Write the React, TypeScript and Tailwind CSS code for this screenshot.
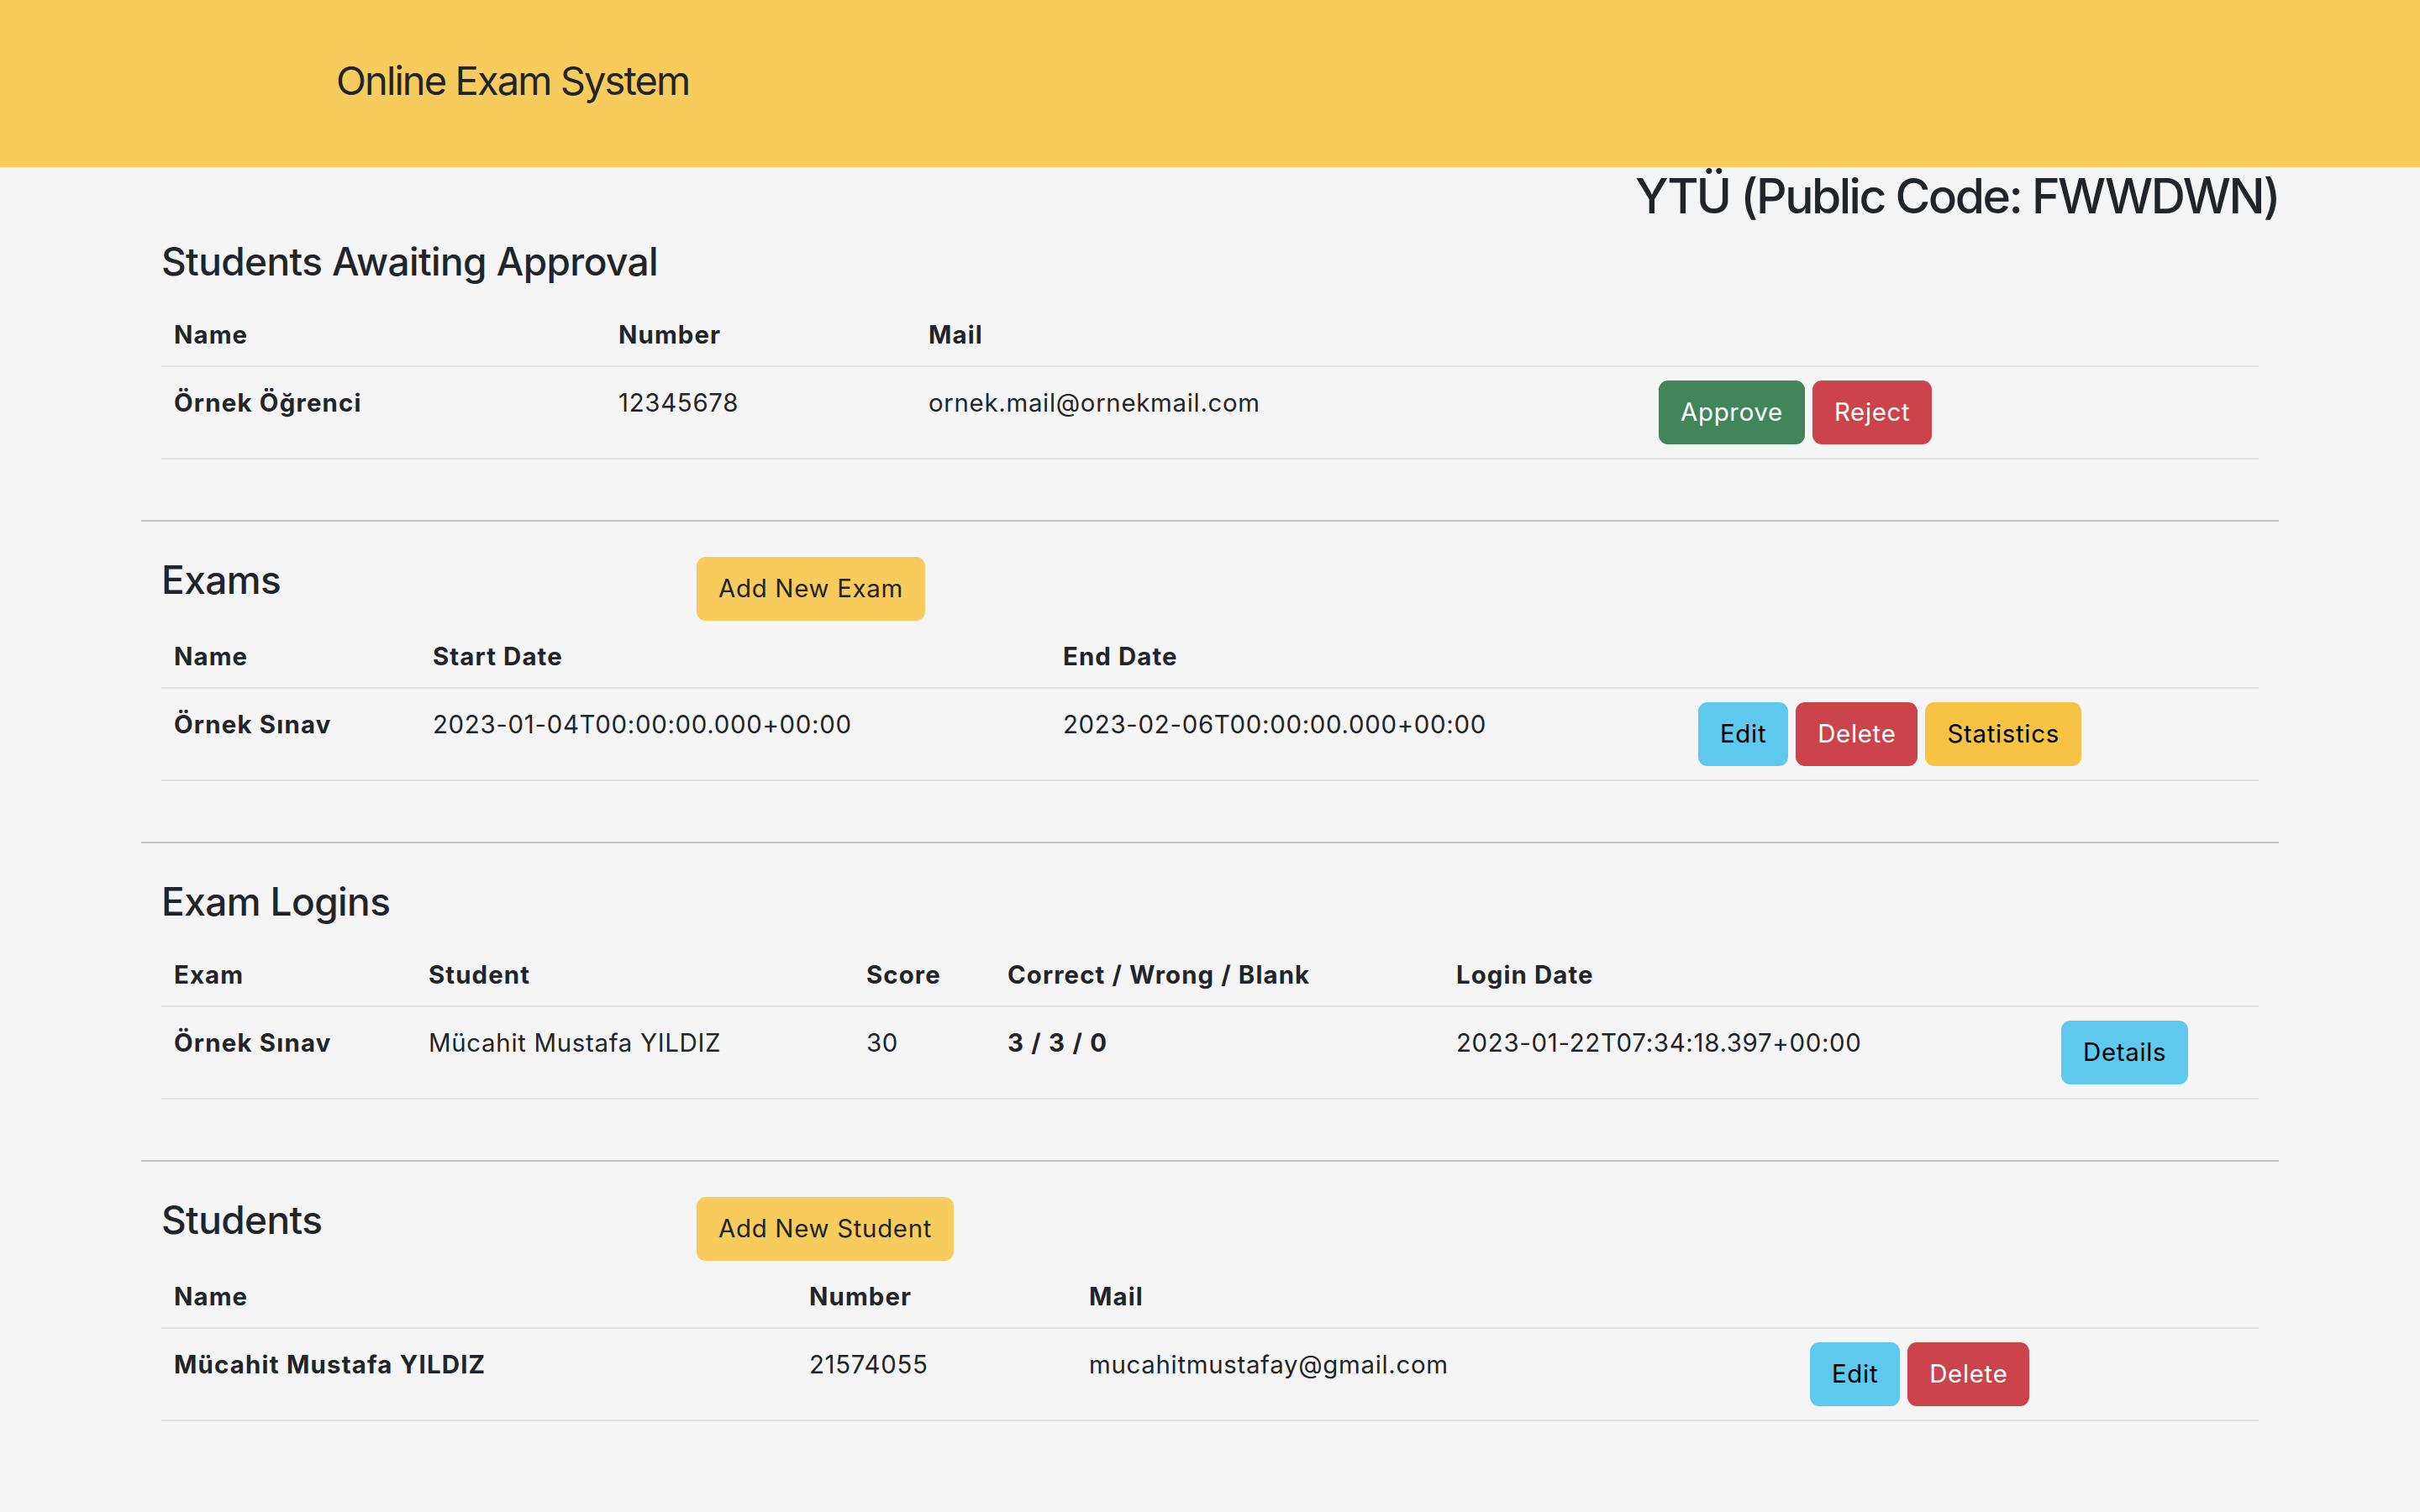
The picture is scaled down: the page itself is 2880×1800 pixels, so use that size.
import React from 'react';

const th = "text-left align-top font-bold tracking-[1.1px] px-[15px] py-[14px] leading-[44px] border-b-2 border-[#dee2e6]";
const td = "text-left align-top px-[15px] pt-[21px] pb-[11px] leading-[44px] border-b-2 border-[#dee2e6]";
const tdBtn = "text-left align-top px-[15px] py-[16px] leading-[44px] border-b-2 border-[#dee2e6]";
const strong = "font-bold tracking-[1.2px]";
const btn = "h-[76px] rounded-[11px] px-[26px] text-[29.4px] leading-none";

function Section({ title, action, children }: { title: string; action?: string; children: React.ReactNode }) {
    return (
        <section className="px-[24px]">
            <div className="flex items-start">
                <h3 className="w-[637px] text-[46px] leading-[55px] font-medium tracking-[-0.6px] mb-[24px]">{title}</h3>
                {action && (
                    <button className={`${btn} mb-[7px] bg-[#f7cb5c] text-[#212529]`}>{action}</button>
                )}
            </div>
            {children}
        </section>
    );
}

function Divider() {
    return <hr className="mt-[72px] mb-[42px] border-0 border-t-2 border-[#c4c4c4]" />;
}

export default function App() {
    return (
        <div className="min-h-screen bg-[#f5f5f5] text-[#212529] text-[29.4px] tracking-[0.7px] font-['Inter',sans-serif]">
            <header className="h-[199px] bg-[#f7cb5c] flex items-center pl-[400px] pb-[6px]">
                <span className="text-[47px] tracking-[-1.9px]">Online Exam System</span>
            </header>

            <div className="w-[2544px] mx-auto">
                <h2 className="text-right text-[57px] font-medium tracking-[-2.5px] leading-[70px] mb-[15px]">YTÜ (Public Code: FWWDWN)</h2>

                <Section title="Students Awaiting Approval">
                    <table className="w-full table-fixed">
                        <colgroup>
                            <col className="w-[529px]" />
                            <col className="w-[369px]" />
                            <col className="w-[869px]" />
                            <col />
                        </colgroup>
                        <thead>
                            <tr>
                                <th className={th}>Name</th>
                                <th className={th}>Number</th>
                                <th className={th}>Mail</th>
                                <th className={th}></th>
                            </tr>
                        </thead>
                        <tbody>
                            <tr>
                                <td className={`${td} ${strong}`}>Örnek Öğrenci</td>
                                <td className={td}>12345678</td>
                                <td className={td}>ornek.mail@ornekmail.com</td>
                                <td className={tdBtn}>
                                    <div className="flex gap-[9px]">
                                        <button className={`${btn} bg-[#42855b] text-white`}>Approve</button>
                                        <button className={`${btn} bg-[#cc444b] text-white`}>Reject</button>
                                    </div>
                                </td>
                            </tr>
                        </tbody>
                    </table>
                </Section>

                <Divider />

                <Section title="Exams" action="Add New Exam">
                    <table className="w-full table-fixed">
                        <colgroup>
                            <col className="w-[308px]" />
                            <col className="w-[750px]" />
                            <col className="w-[756px]" />
                            <col />
                        </colgroup>
                        <thead>
                            <tr>
                                <th className={th}>Name</th>
                                <th className={th}>Start Date</th>
                                <th className={th}>End Date</th>
                                <th className={th}></th>
                            </tr>
                        </thead>
                        <tbody>
                            <tr>
                                <td className={`${td} ${strong}`}>Örnek Sınav</td>
                                <td className={td}>2023-01-04T00:00:00.000+00:00</td>
                                <td className={td}>2023-02-06T00:00:00.000+00:00</td>
                                <td className={tdBtn}>
                                    <div className="flex gap-[9px]">
                                        <button className={`${btn} bg-[#5ec8ed] text-black`}>Edit</button>
                                        <button className={`${btn} bg-[#cc444b] text-white`}>Delete</button>
                                        <button className={`${btn} bg-[#f6c344] text-black`}>Statistics</button>
                                    </div>
                                </td>
                            </tr>
                        </tbody>
                    </table>
                </Section>

                <Divider />

                <Section title="Exam Logins">
                    <table className="w-full table-fixed">
                        <colgroup>
                            <col className="w-[303px]" />
                            <col className="w-[521px]" />
                            <col className="w-[168px]" />
                            <col className="w-[534px]" />
                            <col className="w-[720px]" />
                            <col />
                        </colgroup>
                        <thead>
                            <tr>
                                <th className={th}>Exam</th>
                                <th className={th}>Student</th>
                                <th className={th}>Score</th>
                                <th className={th}>Correct / Wrong / Blank</th>
                                <th className={th}>Login Date</th>
                                <th className={th}></th>
                            </tr>
                        </thead>
                        <tbody>
                            <tr>
                                <td className={`${td} ${strong}`}>Örnek Sınav</td>
                                <td className={td}>Mücahit Mustafa YILDIZ</td>
                                <td className={td}>30</td>
                                <td className={`${td} ${strong}`}>3 / 3 / 0</td>
                                <td className={td}>2023-01-22T07:34:18.397+00:00</td>
                                <td className={tdBtn}>
                                    <button className={`${btn} bg-[#5ec8ed] text-black`}>Details</button>
                                </td>
                            </tr>
                        </tbody>
                    </table>
                </Section>

                <Divider />

                <Section title="Students" action="Add New Student">
                    <table className="w-full table-fixed">
                        <colgroup>
                            <col className="w-[756px]" />
                            <col className="w-[333px]" />
                            <col className="w-[858px]" />
                            <col />
                        </colgroup>
                        <thead>
                            <tr>
                                <th className={th}>Name</th>
                                <th className={th}>Number</th>
                                <th className={th}>Mail</th>
                                <th className={th}></th>
                            </tr>
                        </thead>
                        <tbody>
                            <tr>
                                <td className={`${td} ${strong}`}>Mücahit Mustafa YILDIZ</td>
                                <td className={td}>21574055</td>
                                <td className={td}>mucahitmustafay@gmail.com</td>
                                <td className={tdBtn}>
                                    <div className="flex gap-[9px]">
                                        <button className={`${btn} bg-[#5ec8ed] text-black`}>Edit</button>
                                        <button className={`${btn} bg-[#cc444b] text-white`}>Delete</button>
                                    </div>
                                </td>
                            </tr>
                        </tbody>
                    </table>
                </Section>
            </div>
        </div>
    );
}
